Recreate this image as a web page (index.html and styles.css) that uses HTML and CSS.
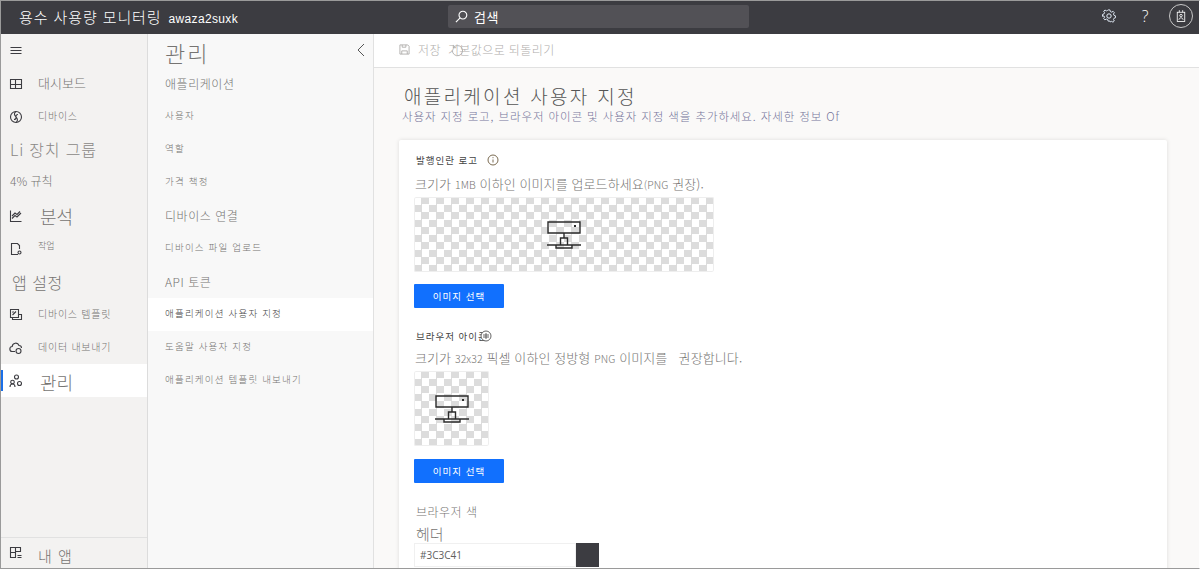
FILE: index.html
```html
<!DOCTYPE html>
<html lang="ko">
<head>
	<meta charset="utf-8">
	<title>애플리케이션 사용자 지정</title>
	<link rel="stylesheet" href="styles.css">
</head>
<body>
	<div class="window">
		<header class="topbar">
			<div class="brand">
				<span class="app-name">용수 사용량 모니터링</span>
				<span class="tenant">awaza2suxk</span>
			</div>
			<div class="search">
				<svg class="search-icon" viewBox="0 0 14 14"><circle cx="8.500" cy="5.500" r="4.200"/><path d="M5.500 8.500 1 13"/></svg>
				<span>검색</span>
			</div>
			<div class="top-actions">
				<svg class="gear" viewBox="0 0 14 14"><circle cx="7" cy="7" r="2.200"/><path d="M6 1h2l.4 1.700 1.500.7 1.500-.9 1.300 1.400-.9 1.500.6 1.500 1.600.5v2l-1.600.5-.6 1.400.9 1.600-1.400 1.300-1.500-.9-1.400.6L8 13H6l-.4-1.600-1.500-.6-1.500.9-1.300-1.400.9-1.500-.7-1.400L0 7.900v-2l1.500-.5.7-1.500-.9-1.500 1.400-1.300 1.500.9 1.400-.6z" transform="translate(.5 0) scale(.93)"/></svg>
				<span class="help">?</span>
				<span class="avatar">
					<svg viewBox="0 0 12 16"><rect x="1.500" y="3.500" width="9" height="11"/><path d="M4 3.500V1M8 3.500V1M3.500 12.500c0-3 5-3 5 0"/><circle cx="6" cy="7.500" r="1.500"/></svg>
				</span>
			</div>
		</header>

		<div class="main">
			<nav class="rail">
				<div class="rail-row">
					<svg class="rail-icon" viewBox="0 0 14 14"><path d="M1.500 3.500h11M1.500 6.500h11M1.500 9.500h11"/></svg>
				</div>
				<div class="rail-row">
					<svg class="rail-icon" viewBox="0 0 14 14"><path d="M1.500 2.500h11v9h-11zM1.500 7.500h11M6.500 2.500v9"/></svg>
					<span class="rail-label size-md">대시보드</span>
				</div>
				<div class="rail-row">
					<svg class="rail-icon" viewBox="0 0 14 14"><circle cx="7" cy="7" r="5.500"/><path d="M7 1.500c-3 2-1 4 0 5.500s3 3 0 5.500M9 4.500c-1.500 0-2 1-2 2M5 9.500c1.500 0 2-1 2-2"/></svg>
					<span class="rail-label size-sm">디바이스</span>
				</div>
				<div class="rail-row">
					<span class="rail-heading group-label">Li 장치 그룹</span>
				</div>
				<div class="rail-row">
					<span class="rail-heading rule-label">4% 규칙</span>
				</div>
				<div class="rail-row">
					<svg class="rail-icon" viewBox="0 0 14 14"><path d="M1.500 1.500v11h11M3 9.500l3-3 2 1.500 4-4M3 7 6 4l2 1.500L11 2.500"/></svg>
					<span class="rail-label size-lg">분석</span>
				</div>
				<div class="rail-row">
					<svg class="rail-icon" viewBox="0 0 14 14"><path d="M9 12.500H2.500v-11h6l2 2V7"/><circle cx="10.500" cy="10.500" r="1.500"/></svg>
					<span class="rail-label size-xs">작업</span>
				</div>
				<div class="rail-row">
					<span class="rail-heading settings-label">앱 설정</span>
				</div>
				<div class="rail-row">
					<svg class="rail-icon" viewBox="0 0 14 14"><path d="M1.500 1.500h8v8h-8zM3.500 9.500v2h9v-5h-3M3.500 7 7 3.500M3.500 4.500l1-1"/></svg>
					<span class="rail-label size-sm">디바이스 템플릿</span>
				</div>
				<div class="rail-row">
					<svg class="rail-icon" viewBox="0 0 14 14"><path d="M6 10.500H3.500a2.500 2.500 0 0 1-.3-5A3.500 3.500 0 0 1 10 4.500a2.500 2.500 0 0 1 2.500 2.500"/><circle cx="9.500" cy="10" r="2.500"/></svg>
					<span class="rail-label size-sm">데이터 내보내기</span>
				</div>
				<div class="rail-row active">
					<svg class="rail-icon" viewBox="0 0 14 14"><circle cx="7.500" cy="3" r="2"/><circle cx="3.500" cy="8" r="1.800"/><circle cx="10.500" cy="9.500" r="2"/><path d="M1 13c0-2 1-3 2.500-3s2.500 1 2.500 3"/></svg>
					<span class="rail-label size-lg active-label">관리</span>
				</div>
				<div class="rail-footer">
					<svg class="rail-icon" viewBox="0 0 14 14"><path d="M1.500 1.500h10v4h-5v6h-5zM1.500 6.500h5M6.500 1.500v5M8.500 9.500h4M8.500 11.500h4"/></svg>
					<span class="rail-label size-foot">내 앱</span>
				</div>
			</nav>

			<aside class="subnav">
				<div class="subnav-head">
					<span class="subnav-title">관리</span>
					<svg class="collapse" viewBox="0 0 8 14"><path d="M7 1 1 7l6 6"/></svg>
				</div>
				<div class="sub-row sub-group">애플리케이션</div>
				<div class="sub-row sub-small">사용자</div>
				<div class="sub-row sub-small">역할</div>
				<div class="sub-row sub-small">가격 책정</div>
				<div class="sub-row sub-group">디바이스 연결</div>
				<div class="sub-row sub-small">디바이스 파일 업로드</div>
				<div class="sub-row sub-group">API 토큰</div>
				<div class="sub-row sub-small current">애플리케이션 사용자 지정</div>
				<div class="sub-row sub-small">도움말 사용자 지정</div>
				<div class="sub-row sub-small">애플리케이션 템플릿 내보내기</div>
			</aside>

			<section class="content">
				<div class="toolbar">
					<svg class="save-icon" viewBox="0 0 12 12"><path d="M1 1h8.500L11 2.500V11H1zM3 11V7.500h6V11M3.500 1v2.500h4V1"/></svg>
					<span class="tool-save">저장</span>
					<span class="tool-reset">기본값으로 되돌리기
						<svg class="undo-icon" viewBox="0 0 14 14"><path d="M2.500 4a5.500 5.500 0 1 1-1 3M2.500 1v3h3"/></svg>
					</span>
				</div>

				<div class="page">
					<h1 class="page-title">애플리케이션 사용자 지정</h1>
					<p class="page-sub">사용자 지정 로고, 브라우저 아이콘 및 사용자 지정 색을 추가하세요. 자세한 정보 Of</p>

					<div class="card">
						<div class="field-label">발행인란 로고
							<svg class="info-icon" viewBox="0 0 12 12"><circle cx="6" cy="6" r="5"/><path d="M6 5.500v3M6 3.200v1"/></svg>
						</div>
						<p class="field-desc">크기가 <span class="desc-latin">1MB</span> 이하인 이미지를 업로드하세요<span class="desc-latin">(PNG</span> 권장).</p>
						<div class="preview preview-wide">
							<svg class="server-icon" viewBox="0 0 34 28"><path d="M1 1h32v11H1zM17 12v5M13.500 24v-7h7v7M0 24h9M25 24h9M9 24h16v3H9z"/><path class="dot" d="M27 4h2v2h-2z"/></svg>
						</div>
						<button class="pick-btn">이미지 선택</button>

						<div class="field-label icon-label">브라우저 아이콘
							<svg class="info-over" viewBox="0 0 12 12"><circle cx="6" cy="6" r="5"/><path d="M3 5h6M3 7h6M6 3v6"/></svg>
						</div>
						<p class="field-desc icon-desc">크기가 <span class="desc-latin">32x32</span> 픽셀 이하인 정방형 <span class="desc-latin">PNG</span> 이미지를&nbsp;&nbsp; 권장합니다.</p>
						<div class="preview preview-square">
							<svg class="server-icon" viewBox="0 0 34 28"><path d="M1 1h32v11H1zM17 12v5M13.500 24v-7h7v7M0 24h9M25 24h9M9 24h16v3H9z"/><path class="dot" d="M27 4h2v2h-2z"/></svg>
						</div>
						<button class="pick-btn pick-second">이미지 선택</button>

						<div class="color-title">브라우저 색</div>
						<div class="color-name">헤더</div>
						<div class="color-row">
							<div class="color-input">#3C3C41</div>
							<div class="color-swatch"></div>
						</div>
					</div>
				</div>
			</section>
		</div>
	</div>
</body>
</html>
```

FILE: styles.css
```css
* {
	box-sizing: border-box;
}

html, body {
	height: 100%;
	margin: 0;
	padding: 0;
	overflow: hidden;
}

body {
	font-family: "Noto Sans CJK KR", "Noto Sans", sans-serif;
	font-weight: 300;
	color: #605e5c;
	background-color: #fff;
}

.window {
	display: flex;
	flex-direction: column;
	height: 569px;
	border: 1px solid #9a9a9a;
	border-right-color: #fff;
	overflow: hidden;
}

/* top bar */
.topbar {
	flex: none;
	display: flex;
	align-items: center;
	height: 33px;
	padding-bottom: 3px;
	background-color: #3c3c41;
	color: #fff;
}

.brand {
	display: flex;
	align-items: baseline;
	width: 447px;
	padding-left: 18px;
	white-space: nowrap;
}

.app-name {
	font-size: 15px;
	letter-spacing: 0.9px;
}

.tenant {
	margin-left: 7px;
	font-family: "Liberation Sans", sans-serif;
	font-size: 12px;
	font-weight: 400;
	letter-spacing: 0.35px;
}

.search {
	display: flex;
	align-items: center;
	width: 301px;
	height: 23px;
	padding-left: 7px;
	background-color: #525156;
	border-radius: 2px;
	font-size: 13px;
	font-weight: 400;
	letter-spacing: 0.5px;
}

.search-icon {
	width: 13px;
	height: 13px;
	margin-right: 6px;
	fill: none;
	stroke: #fff;
	stroke-width: 1.2;
}

.top-actions {
	display: flex;
	align-items: center;
	margin-left: auto;
	padding-right: 6px;
}

.gear {
	width: 14px;
	height: 14px;
	fill: none;
	stroke: #e4eefa;
	stroke-width: 1;
}

.help {
	margin-left: 24px;
	width: 10px;
	font-family: "Open Sans", sans-serif;
	font-size: 16px;
	text-align: center;
}

.avatar {
	display: flex;
	align-items: center;
	justify-content: center;
	width: 24px;
	height: 24px;
	margin-left: 19px;
	border: 1px solid #c8c8c8;
	border-radius: 50%;
}

.avatar svg {
	width: 10px;
	height: 14px;
	fill: none;
	stroke: #fff;
	stroke-width: 1;
}

.main {
	flex: 1;
	display: flex;
	min-height: 0;
}

/* left rail */
.rail {
	flex: none;
	display: flex;
	flex-direction: column;
	width: 147px;
	background-color: #f3f2f1;
	border-right: 1px solid #dcdcdc;
}

.rail-row {
	position: relative;
	flex: none;
	display: flex;
	align-items: center;
	height: 33px;
	padding-left: 8px;
	white-space: nowrap;
}

.rail-row.active {
	background-color: #fff;
}

.rail-row.active::before {
	content: "";
	position: absolute;
	left: 0;
	top: 6px;
	width: 2px;
	height: 21px;
	background-color: #1a6fe8;
}

.rail-icon {
	flex: none;
	width: 14px;
	height: 14px;
	fill: none;
	stroke: #3c3c41;
	stroke-width: 1.1;
}

.rail-label {
	margin-left: 15px;
	color: #767472;
}

.size-xs {
	font-size: 9px;
	margin-top: -6px;
}

.size-sm {
	margin-top: -2px;
	font-size: 10px;
	letter-spacing: 0.75px;
}

.size-md {
	margin-top: -2px;
	font-size: 13px;
}

.size-lg {
	margin-left: 17px;
	font-size: 18px;
}

.active-label {
	margin-top: 3px;
}

.size-foot {
	margin-top: 4px;
	font-size: 15px;
	letter-spacing: 1px;
}

.rail-heading {
	color: #8a8886;
}

.group-label {
	margin-left: 1px;
	margin-top: -2px;
	font-size: 16px;
	letter-spacing: 0.8px;
}

.rule-label {
	margin-left: 1px;
	margin-top: -5px;
	font-size: 12px;
	color: #767472;
}

.settings-label {
	margin-left: 3px;
	font-size: 16px;
	letter-spacing: 0.5px;
	color: #767472;
}

.rail-footer {
	display: flex;
	align-items: center;
	margin-top: auto;
	height: 31px;
	padding-left: 8px;
	border-top: 1px solid #e1e1e1;
}

/* second column */
.subnav {
	flex: none;
	width: 226px;
	background-color: #f8f8f8;
	border-right: 1px solid #e1e1e1;
}

.subnav-head {
	display: flex;
	align-items: center;
	justify-content: space-between;
	height: 33px;
	padding: 0 8px 0 17px;
}

.subnav-title {
	font-size: 22px;
	letter-spacing: 2px;
	color: #767472;
	padding-top: 3px;
}

.collapse {
	width: 8px;
	height: 14px;
	margin-top: -2px;
	fill: none;
	stroke: #555;
	stroke-width: 1;
}

.sub-row {
	display: flex;
	align-items: center;
	height: 33px;
	padding-left: 17px;
	white-space: nowrap;
	color: #767472;
}

.sub-group {
	padding-bottom: 1px;
	font-size: 12px;
	letter-spacing: 0.55px;
}

.sub-small {
	padding-bottom: 4px;
	font-size: 9.500px;
	letter-spacing: 1.2px;
}

.sub-row.current {
	background-color: #fff;
	color: #444;
}

/* content */
.content {
	flex: 1;
	display: flex;
	flex-direction: column;
	min-width: 0;
	background-color: #faf9f8;
}

.toolbar {
	flex: none;
	display: flex;
	align-items: center;
	height: 34px;
	padding: 0 0 3px 25px;
	background-color: #fff;
	border-bottom: 1px solid #e1e1e1;
	color: #b0aeac;
	font-size: 12px;
}

.save-icon {
	width: 11px;
	height: 11px;
	fill: none;
	stroke: #b0aeac;
	stroke-width: 1;
}

.tool-save {
	margin-left: 8px;
	letter-spacing: 0.4px;
}

.tool-reset {
	position: relative;
	margin-left: 7px;
	letter-spacing: 0.4px;
}

.undo-icon {
	position: absolute;
	left: 3px;
	top: 3px;
	width: 13px;
	height: 13px;
	fill: none;
	stroke: #b0aeac;
	stroke-width: 1;
}

.page {
	padding: 17px 32px 0 25px;
}

.page-title {
	margin: 0 0 0 5px;
	font-size: 19px;
	font-weight: 300;
	line-height: 22px;
	letter-spacing: 2.300px;
	color: #555;
}

.page-sub {
	margin: 1px 0 0 3px;
	font-size: 11.500px;
	line-height: 17px;
	letter-spacing: 0.9px;
	color: #75759a;
	white-space: nowrap;
}

.card {
	height: 460px;
	margin-top: 15px;
	padding: 12px 15px;
	background-color: #fff;
	border-radius: 2px;
	box-shadow: 0 0 4px rgba(0, 0, 0, 0.12);
}

.field-label {
	position: relative;
	display: flex;
	align-items: center;
	height: 16px;
	margin-left: 2px;
	font-size: 9.500px;
	font-weight: 400;
	letter-spacing: 1px;
	color: #444;
}

.info-icon {
	width: 12px;
	height: 12px;
	margin-left: 9px;
	fill: none;
	stroke: #7a6a50;
	stroke-width: 1;
}

.info-over {
	position: absolute;
	left: 64px;
	top: 2px;
	width: 12px;
	height: 12px;
	fill: #fff;
	stroke: #555;
	stroke-width: 0.9;
}

.field-desc {
	height: 17px;
	margin: 7px 0 0 1px;
	font-size: 13px;
	line-height: 17px;
	letter-spacing: 0.1px;
	color: #767472;
	white-space: nowrap;
}

.icon-desc {
	margin-top: 5px;
}

.desc-latin {
	font-size: 10.500px;
}

.preview {
	display: flex;
	align-items: center;
	justify-content: center;
	height: 75px;
	margin-top: 5px;
	background-color: #fff;
	background-image: conic-gradient(#dcdcdc 25%, #fff 0 50%, #dcdcdc 0 75%, #fff 0);
	background-size: 15px 15px;
	border-radius: 2px;
	box-shadow: inset 0 0 0 1px #eee;
}

.preview-wide {
	width: 300px;
}

.preview-square {
	width: 75px;
}

.server-icon {
	width: 34px;
	height: 28px;
	fill: none;
	stroke: #2b2b2b;
	stroke-width: 1.400;
}

.server-icon .dot {
	fill: #2b2b2b;
	stroke: none;
}

.pick-btn {
	display: block;
	width: 90px;
	height: 24px;
	margin-top: 12px;
	padding: 0;
	background-color: #1170fe;
	border: none;
	border-radius: 1px;
	color: #fff;
	font-family: inherit;
	font-size: 9.500px;
	font-weight: 400;
	letter-spacing: 1px;
}

.pick-second {
	margin-top: 13px;
}

.icon-label {
	margin-top: 20px;
}

.color-title {
	margin: 21px 0 0 2px;
	font-size: 12px;
	line-height: 16px;
	letter-spacing: 0.5px;
	color: #767472;
}

.color-name {
	margin: 5px 0 0 2px;
	font-size: 15px;
	line-height: 18px;
	color: #767472;
}

.color-row {
	display: flex;
}

.color-input {
	width: 162px;
	height: 24px;
	padding-left: 5px;
	border: 1px solid #f0f0f0;
	font-family: "Open Sans", sans-serif;
	font-size: 10px;
	font-weight: 400;
	line-height: 22px;
	color: #605e5c;
}

.color-swatch {
	width: 23px;
	height: 24px;
	background-color: #3c3c41;
}
```
